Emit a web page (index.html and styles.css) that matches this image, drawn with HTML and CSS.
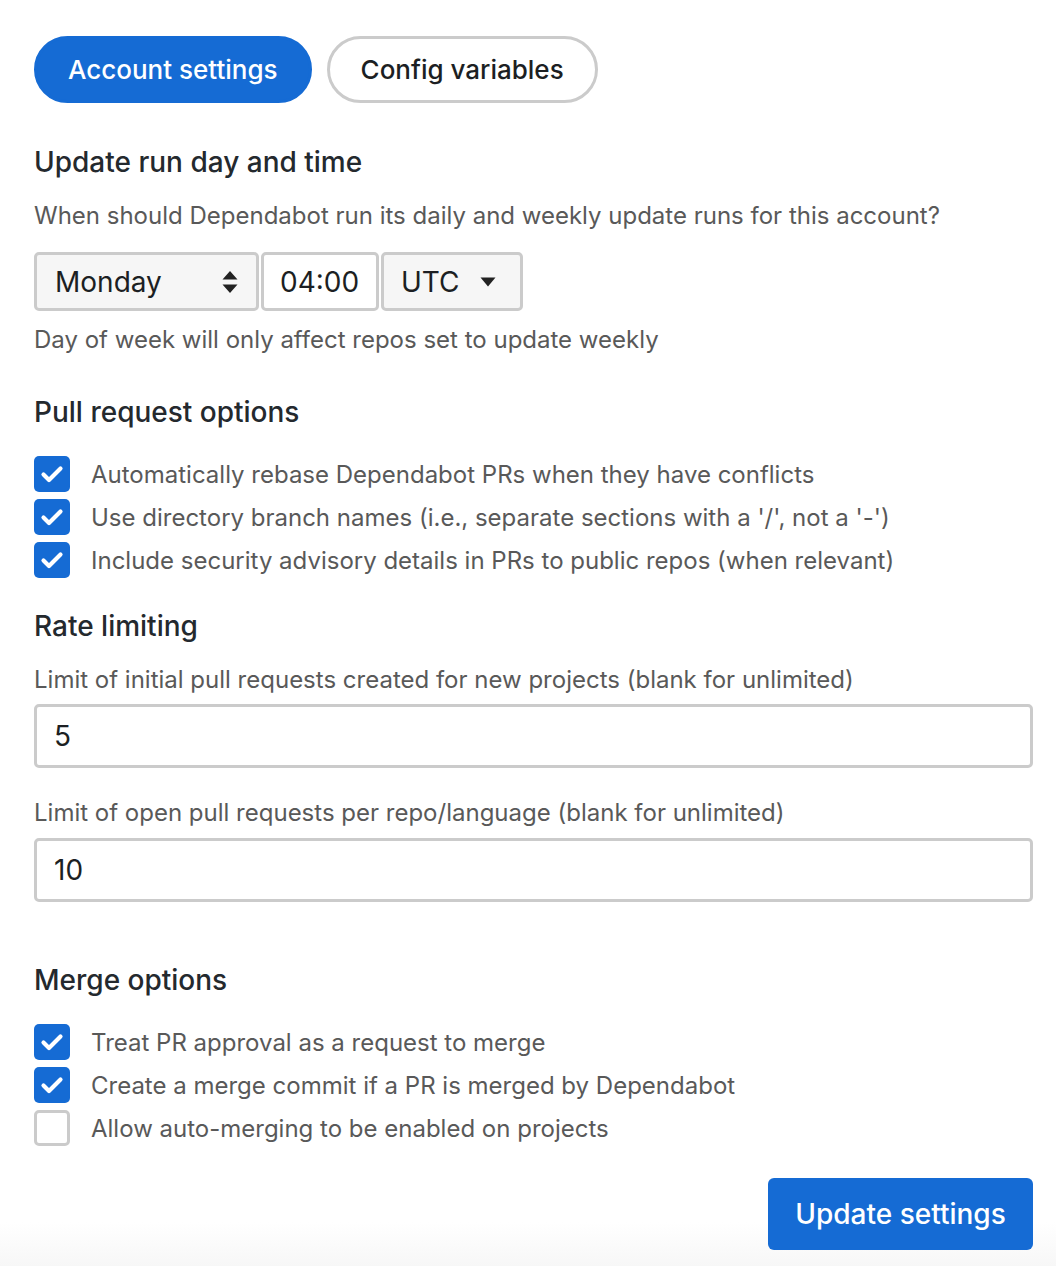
FILE: index.html
```html
<!DOCTYPE html>
<html lang="en">
<head>
<meta charset="utf-8">
<title>Account settings</title>
<link rel="stylesheet" href="styles.css">
</head>
<body>
<div class="page">
  <nav class="tabs">
    <a class="tab tab-active">Account settings</a>
    <a class="tab">Config variables</a>
  </nav>

  <h2 class="h-first">Update run day and time</h2>
  <p class="desc">When should Dependabot run its daily and weekly update runs for this account?</p>
  <div class="time-row">
    <div class="select select-day"><span>Monday</span>
      <svg class="updown" width="16" height="24" viewBox="0 0 16 24"><path d="M8 1 L15.5 9.5 H0.5 Z M8 23 L15.5 14.5 H0.5 Z" fill="#222"/></svg>
    </div>
    <div class="input-time">04:00</div>
    <div class="select select-tz"><span>UTC</span>
      <svg class="down" width="16" height="10" viewBox="0 0 16 10"><path d="M0.5 0.5 H15.5 L8 9.5 Z" fill="#222"/></svg>
    </div>
  </div>
  <p class="hint">Day of week will only affect repos set to update weekly</p>

  <h2 class="h-pr">Pull request options</h2>
  <ul class="checks">
    <li><span class="cb on"><svg viewBox="0 0 36 36"><path d="M9.5 18.5 L15 24 L26.5 12.5" /></svg></span>Automatically rebase Dependabot PRs when they have conflicts</li>
    <li><span class="cb on"><svg viewBox="0 0 36 36"><path d="M9.5 18.5 L15 24 L26.5 12.5" /></svg></span>Use directory branch names (i.e., separate sections with a '/', not a '-')</li>
    <li><span class="cb on"><svg viewBox="0 0 36 36"><path d="M9.5 18.5 L15 24 L26.5 12.5" /></svg></span>Include security advisory details in PRs to public repos (when relevant)</li>
  </ul>

  <h2 class="h-rate">Rate limiting</h2>
  <label class="field-label l-first">Limit of initial pull requests created for new projects (blank for unlimited)</label>
  <div class="text-input i-first">5</div>
  <label class="field-label l-second">Limit of open pull requests per repo/language (blank for unlimited)</label>
  <div class="text-input i-second">10</div>

  <h2 class="h-merge">Merge options</h2>
  <ul class="checks">
    <li><span class="cb on"><svg viewBox="0 0 36 36"><path d="M9.5 18.5 L15 24 L26.5 12.5" /></svg></span>Treat PR approval as a request to merge</li>
    <li><span class="cb on"><svg viewBox="0 0 36 36"><path d="M9.5 18.5 L15 24 L26.5 12.5" /></svg></span>Create a merge commit if a PR is merged by Dependabot</li>
    <li><span class="cb"></span>Allow auto-merging to be enabled on projects</li>
  </ul>

  <div class="actions">
    <button class="btn-primary">Update settings</button>
  </div>
</div>
</body>
</html>
```

FILE: styles.css
```css
* { box-sizing: border-box; }
html, body { margin: 0; padding: 0; }
body {
  font-family: Inter, "Noto Sans", "Liberation Sans", sans-serif;
  color: #555;
  min-height: 1266px;
  background: linear-gradient(to bottom, #ffffff 0, #ffffff 1222px, #f7f7f7 1266px);
}
.page {
  padding: 36px 23px 0 34px;
  display: flex;
  flex-direction: column;
}
.tabs {
  display: flex;
  gap: 15px;
}
.tab {
  height: 67px;
  display: flex;
  align-items: center;
  padding: 0 31px;
  border: 3px solid #cbcbcb;
  border-radius: 34px;
  font-size: 26px;
  font-weight: 500;
  color: #1c1f23;
  background: #fff;
}
.tab-active {
  background: #156bd4;
  border-color: #156bd4;
  color: #fff;
}
h2 {
  margin: 0;
  font-size: 28px;
  line-height: 32px;
  font-weight: 500;
  color: #24292e;
}
.h-first { margin-top: 43px; }
.h-pr { margin-top: 41px; }
.h-rate { margin-top: 32px; }
.h-merge { margin-top: 62px; }
.desc, .hint, .field-label {
  margin: 0;
  font-size: 24px;
  line-height: 30px;
  color: #595959;
}
.desc { margin-top: 23px; }
.hint { margin-top: 14px; }
.time-row {
  margin-top: 21px;
  display: flex;
  gap: 2px;
  height: 59px;
}
.select, .input-time {
  border: 3px solid #cbcbcb;
  border-radius: 5px;
  display: flex;
  align-items: center;
  font-size: 28px;
  color: #1c1f23;
}
.select { background: #f6f6f6; }
.select-day {
  width: 225px;
  padding: 0 14px 0 18px;
  justify-content: space-between;
}
.input-time {
  width: 118px;
  padding-left: 16px;
  background: #fff;
}
.select-tz {
  width: 142px;
  padding: 0 24px 0 17px;
  justify-content: space-between;
}
.updown { margin-right: 4px; }
.checks {
  list-style: none;
  margin: 28px 0 0;
  padding: 0;
  display: flex;
  flex-direction: column;
  gap: 7px;
}
.checks li {
  display: flex;
  align-items: center;
  height: 36px;
  font-size: 24px;
  color: #595959;
}
.cb {
  width: 36px;
  height: 36px;
  border-radius: 5px;
  border: 3px solid #cbcbcb;
  background: #fff;
  margin-right: 21px;
  flex: none;
  display: flex;
}
.cb.on {
  background: #156bd4;
  border: none;
}
.cb svg {
  width: 36px;
  height: 36px;
}
.cb svg path {
  fill: none;
  stroke: #fff;
  stroke-width: 4.2;
  stroke-linecap: round;
  stroke-linejoin: round;
}
.l-first { margin-top: 23px; }
.l-second { margin-top: 30px; }
.text-input {
  height: 64px;
  border: 3px solid #cbcbcb;
  border-radius: 5px;
  display: flex;
  align-items: center;
  padding-left: 17px;
  font-size: 28px;
  color: #1c1f23;
  background: #fff;
}
.i-first { margin-top: 9px; }
.i-second { margin-top: 10px; }
.actions {
  margin-top: 32px;
  display: flex;
  justify-content: flex-end;
}
.btn-primary {
  height: 72px;
  width: 265px;
  border: none;
  border-radius: 6px;
  background: #156bd4;
  color: #fff;
  font-family: inherit;
  font-size: 28px;
  font-weight: 500;
}
```
